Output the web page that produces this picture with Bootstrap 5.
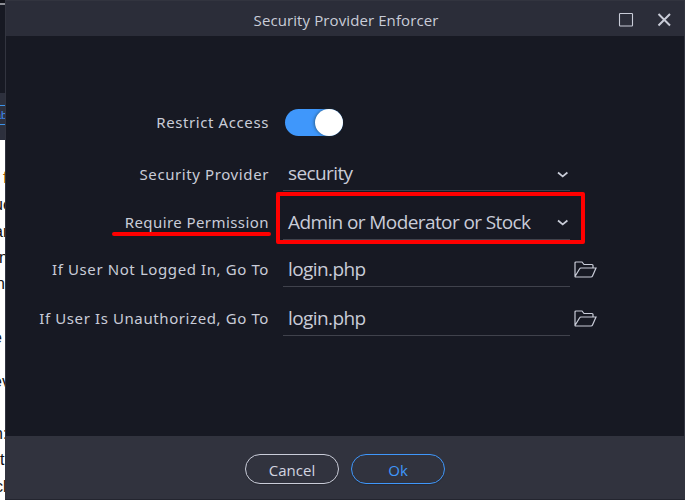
<!DOCTYPE html>
<html lang="en">
<head>
<meta charset="utf-8">
<meta name="viewport" content="width=device-width, initial-scale=1">
<title>Security Provider Enforcer</title>
<link href="https://cdn.jsdelivr.net/npm/bootstrap@5.3.0/dist/css/bootstrap.min.css" rel="stylesheet">
<style>
body{width:685px;height:500px;overflow:hidden;background:#171923;color:#c9ccd8;font-family:"Open Sans","Noto Sans",sans-serif}
.backdrop-strip{width:5px;background:#fff;color:#111;font:16px/20px "Liberation Sans",sans-serif}
.strip-app{height:140px;background:#171923;border-top:3px solid #101118}
.strip-app .edge{height:2px;background:#8b8d94}
.strip-app .gap-area{height:88px}
.strip-app .tabs{height:47px;background:#2d303d}
.strip-app .tab-cell{height:20px;margin-top:12px;border:solid #3c92e8;border-width:1px 0;color:#3d8bf2;font-size:11px;line-height:18px}
.frag{position:absolute;white-space:nowrap}
.dialog{border:1px solid #32343f;border-bottom-color:#23252f}
.title-bar{height:35px;background:#2b2d39;font-size:15px;line-height:38px;padding-left:2px}
.title-text{letter-spacing:.1px}
.window-icons{right:13px;top:11px}
.form-area{height:400px;padding-top:60px}
.field-row{height:49px}
.field-label{width:263px;font-family:"Noto Sans",sans-serif;font-size:15px;letter-spacing:.6px}
.label-tight{letter-spacing:.43px}
.field-box{width:287px;height:34px;margin-left:14px;padding:0 0 0 5px;font-size:19px;letter-spacing:-.6px;border-bottom:1px solid #40424c}
.toggle{width:58px;height:27px;border-radius:14px;background:#3f97fb;margin-left:16px}
.knob{width:28px;height:27px;border-radius:50%;background:#fff;box-shadow:-1px 0 3px #2459}
.row-switch{height:52px}.row-provider{height:52px}.row-permission{height:45px}
.hl-box{left:270px;top:191px;width:309px;height:52px;border:4px solid #f00;border-radius:2px}
.hl-line{left:106px;top:231px;width:159px;height:4px;border-radius:2px;background:#f00}
.footer-bar{background:#31333e;padding-top:18px;gap:12px}
.pill{width:94px;height:30px;padding:0;border:1px solid #c9ccd8;border-radius:15px;color:#d2d5e0;font-size:15px;line-height:30px;box-shadow:0 1px 1px #0003}
.pill-ok{border-color:#3f97fb;color:#3f97fb}
</style>
<script src="https://cdn.jsdelivr.net/npm/bootstrap@5.3.0/dist/js/bootstrap.bundle.min.js"></script>
</head>
<body class="d-flex">
<aside class="backdrop-strip position-relative overflow-hidden flex-shrink-0" aria-hidden="true">
<div class="strip-app"><div class="edge"></div><div class="gap-area"></div><div class="tabs overflow-hidden"><div class="tab-cell position-relative"><span class="frag" style="left:-5px">ab</span></div></div></div>
<span class="frag" style="left:3px;top:168px;color:#a65a00">f</span><span class="frag" style="left:-6px;top:195px">ue</span><span class="frag" style="left:-6px;top:222px">ar</span><span class="frag" style="left:-1px;top:248px">n</span><span class="frag" style="left:-4px;top:274px">n</span><span class="frag" style="left:-7px;top:328px">e</span><span class="frag" style="left:-7px;top:372px">ev</span><span class="frag" style="left:-6px;top:424px">n:</span><span class="frag" style="left:0;top:450px">t</span><span class="frag" style="left:-5px;top:477px">cl</span>
</aside>
<main class="dialog flex-grow-1 d-flex flex-column position-relative">
<header class="title-bar text-center position-relative"><span class="title-text">Security Provider Enforcer</span>
<svg class="window-icons position-absolute" width="54" height="16" fill="none" stroke="#c9ccd8"><rect x="2.5" y="1.5" width="13" height="12.5" rx=".7" stroke-width="1.1"/><path d="M41.500 2 53 13.500M53 2 41.500 13.500" stroke-width="2"/></svg></header>
<section class="form-area">
<div class="field-row row-switch d-flex align-items-center"><div class="field-label text-end"><span>Restrict Access</span></div><div class="toggle d-flex justify-content-end"><div class="knob"></div></div></div>
<div class="field-row row-provider d-flex align-items-center"><div class="field-label text-end"><span>Security Provider</span></div><div class="field-box d-flex align-items-center justify-content-between"><span>security</span><svg width="13" height="8" fill="none" stroke="#c9ccd8" stroke-width="1.7"><path d="m1 2.500 4.700 4 4.700-4"/></svg></div></div>
<div class="field-row row-permission d-flex align-items-center"><div class="field-label label-tight text-end"><span>Require Permission</span></div><div class="field-box d-flex align-items-center justify-content-between"><span>Admin or Moderator or Stock</span><svg width="13" height="8" fill="none" stroke="#c9ccd8" stroke-width="1.7"><path d="m1 2.500 4.700 4 4.700-4"/></svg></div></div>
<div class="field-row d-flex align-items-center"><div class="field-label text-end"><span>If User Not Logged In, Go To</span></div><div class="field-box d-flex align-items-center"><span>login.php</span></div><svg class="ms-1" width="23" height="18" fill="none" stroke="#c9ccd8" stroke-width="1.2"><path d="M1 15.500V2q0-1 1-1h6l2 2.500h8q1 0 1 1V7M1 15.500 5.500 8q.5-1 1.500-1H22l-3.500 8q-.4 1-1.500 1H2q-1 0-1-.5Z"/></svg></div>
<div class="field-row d-flex align-items-center"><div class="field-label text-end"><span>If User Is Unauthorized, Go To</span></div><div class="field-box d-flex align-items-center"><span>login.php</span></div><svg class="ms-1" width="23" height="18" fill="none" stroke="#c9ccd8" stroke-width="1.2"><path d="M1 15.500V2q0-1 1-1h6l2 2.500h8q1 0 1 1V7M1 15.500 5.500 8q.5-1 1.500-1H22l-3.500 8q-.4 1-1.500 1H2q-1 0-1-.5Z"/></svg></div>
</section>
<footer class="footer-bar flex-grow-1 d-flex justify-content-center align-items-start"><button class="btn pill">Cancel</button><button class="btn pill pill-ok">Ok</button></footer>
<div class="hl-box position-absolute"></div>
<div class="hl-line position-absolute"></div>
</main>
</body>
</html>
